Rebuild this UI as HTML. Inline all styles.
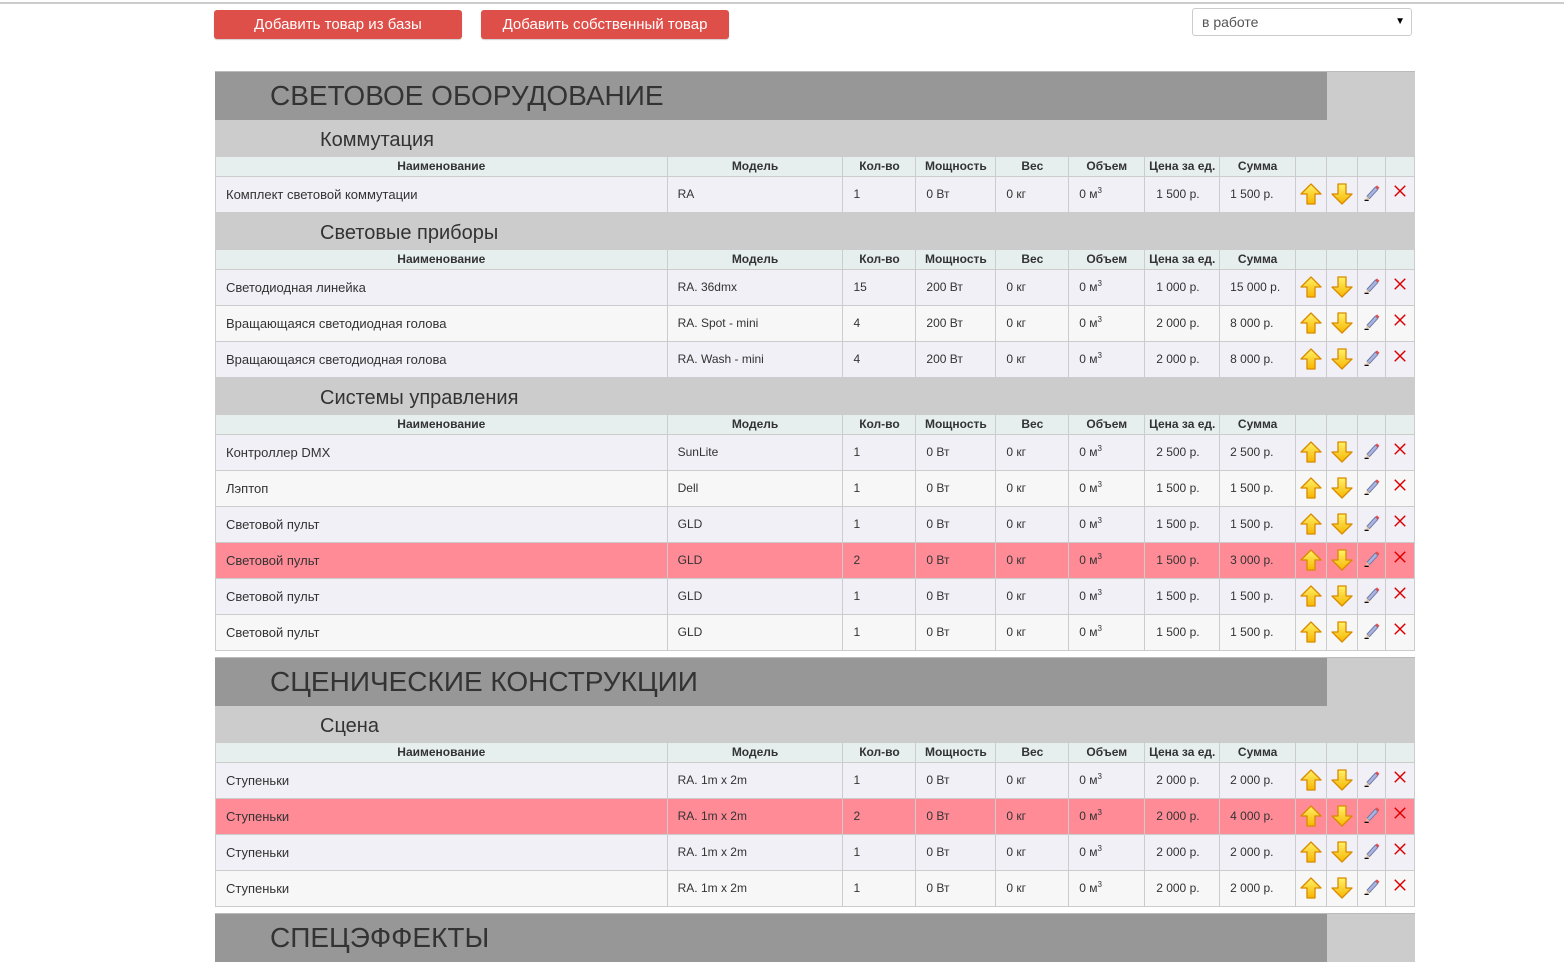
<!DOCTYPE html>
<html><head><meta charset="utf-8"><style>
*{box-sizing:border-box;margin:0;padding:0}
body{width:1564px;height:940px;overflow:hidden;background:#fff;font-family:"Liberation Sans",Arial,sans-serif;color:#333;position:relative}
.topline{position:absolute;left:0;top:0;width:1564px;height:4px;background:#fff;border-bottom:2px solid #ccc}
.btn{position:absolute;top:10px;height:29px;background:#de4f4a;border-radius:3px;color:#fff;font-size:15px;line-height:29px;text-align:center;box-shadow:0 1px 1px rgba(0,0,0,.2)}
.sel{position:absolute;left:1192px;top:8px;width:220px;height:28px;border:1px solid #ccc;border-radius:3px;font-size:14px;line-height:26px;padding-left:9px;color:#555}
.sel span{position:absolute;right:6px;top:0;font-size:10px;color:#000}
.wrap{position:absolute;left:215px;width:1200px}
.cat{height:49px;background:#ccc;position:relative;border-top:1px solid #bbb}
.cat div{position:absolute;left:0;top:0;width:1112px;height:48px;background:#979797;font-size:28px;line-height:48px;padding-left:55px;color:#333}
.sub{height:37px;background:#ccc;font-size:20px;line-height:37px;padding-left:105px;padding-top:2px;color:#333}
.r{display:flex;height:36px;border-bottom:1px solid #ccc;border-left:1px solid #ccc;border-right:1px solid #ccc;font-size:12px;line-height:35px}
.r>div{border-right:1px solid #ccc;padding-left:10px;white-space:nowrap;overflow:hidden}
.r>div:last-child{border-right:none}
.h{height:20px;line-height:19px;background:#e6eeee;font-weight:bold;font-size:12px}
.h>div{text-align:center;padding-left:0 !important;overflow:visible !important}
.a{background:#f0f0f6}.b{background:#f7f7f7}.p{background:#ff8b97}
.r>div:nth-child(1){width:452px;font-size:13px}
.h>div:nth-child(1){font-size:12px}
.r>div:nth-child(2){width:176px}
.r>div:nth-child(3){width:73px}
.r>div:nth-child(4){width:80px}
.r>div:nth-child(5){width:73px}
.r>div:nth-child(6){width:76px}
.r>div:nth-child(7){width:75px}
.r>div:nth-child(8){width:76px}
.r>div:nth-child(9){width:31px;padding:0}
.r>div:nth-child(10){width:31px;padding:0}
.r>div:nth-child(11){width:28px;padding:0}
.r>div:nth-child(12){width:28px;padding:0}
.r>div:nth-child(7){padding-left:11px}
svg{display:block;margin:5px auto 0}
sup{font-size:8px;line-height:0}
</style></head><body>
<div class="topline"></div>
<div class="btn" style="left:214px;width:248px">Добавить товар из базы</div>
<div class="btn" style="left:481px;width:248px">Добавить собственный товар</div>
<div class="sel">в работе<span>▼</span></div>

<svg width="0" height="0" style="position:absolute">
<defs>
<linearGradient id="g" x1="0" y1="0" x2="0" y2="1"><stop offset="0" stop-color="#fff26a"/><stop offset="1" stop-color="#f7b500"/></linearGradient>
<symbol id="up" viewBox="0 0 24 24"><path d="M12 2 L22 12 L16 12 L16 22 L8 22 L8 12 L2 12 Z" fill="url(#g)" stroke="#d98a00" stroke-width="1.3" stroke-linejoin="round"/></symbol>
<symbol id="dn" viewBox="0 0 24 24"><path d="M12 22 L22 12 L16 12 L16 2 L8 2 L8 12 L2 12 Z" fill="url(#g)" stroke="#d98a00" stroke-width="1.3" stroke-linejoin="round"/></symbol>
<symbol id="ed" viewBox="0 0 24 24"><path d="M6 17 L16 6 L19 9 L9 20 Z" fill="#a8b4e0" stroke="#6670a0" stroke-width="1"/><path d="M16 6 L18 4 L21 7 L19 9 Z" fill="#e05050"/><path d="M6 17 L9 20 L5 21 Z" fill="#e8c890"/><path d="M3 22 L8 22" stroke="#000" stroke-width="1.5"/></symbol>
<symbol id="x" viewBox="0 0 24 24"><path d="M5 5 L19 19 M19 5 L5 19" stroke="#d00" stroke-width="2"/></symbol>
</defs></svg>

<div class="wrap" style="top:71px">
<div class="cat"><div>СВЕТОВОЕ ОБОРУДОВАНИЕ</div></div>
<div class="sub">Коммутация</div>
<div class="r h"><div>Наименование</div><div>Модель</div><div>Кол-во</div><div>Мощность</div><div>Вес</div><div>Объем</div><div>Цена за ед.</div><div>Сумма</div><div></div><div></div><div></div><div></div></div>
<div class="r a"><div>Комплект световой коммутации</div><div>RA</div><div>1</div><div>0 Вт</div><div>0 кг</div><div>0 м<sup>3</sup></div><div>1 500 р.</div><div>1 500 р.</div><div><svg width="24" height="24"><use href="#up"/></svg></div><div><svg width="24" height="24"><use href="#dn"/></svg></div><div><svg width="20" height="20"><use href="#ed"/></svg></div><div><svg width="18" height="18"><use href="#x"/></svg></div></div>
<div class="sub">Световые приборы</div>
<div class="r h"><div>Наименование</div><div>Модель</div><div>Кол-во</div><div>Мощность</div><div>Вес</div><div>Объем</div><div>Цена за ед.</div><div>Сумма</div><div></div><div></div><div></div><div></div></div>
<div class="r a"><div>Светодиодная линейка</div><div>RA. 36dmx</div><div>15</div><div>200 Вт</div><div>0 кг</div><div>0 м<sup>3</sup></div><div>1 000 р.</div><div>15 000 р.</div><div><svg width="24" height="24"><use href="#up"/></svg></div><div><svg width="24" height="24"><use href="#dn"/></svg></div><div><svg width="20" height="20"><use href="#ed"/></svg></div><div><svg width="18" height="18"><use href="#x"/></svg></div></div>
<div class="r b"><div>Вращающаяся светодиодная голова</div><div>RA. Spot - mini</div><div>4</div><div>200 Вт</div><div>0 кг</div><div>0 м<sup>3</sup></div><div>2 000 р.</div><div>8 000 р.</div><div><svg width="24" height="24"><use href="#up"/></svg></div><div><svg width="24" height="24"><use href="#dn"/></svg></div><div><svg width="20" height="20"><use href="#ed"/></svg></div><div><svg width="18" height="18"><use href="#x"/></svg></div></div>
<div class="r a"><div>Вращающаяся светодиодная голова</div><div>RA. Wash - mini</div><div>4</div><div>200 Вт</div><div>0 кг</div><div>0 м<sup>3</sup></div><div>2 000 р.</div><div>8 000 р.</div><div><svg width="24" height="24"><use href="#up"/></svg></div><div><svg width="24" height="24"><use href="#dn"/></svg></div><div><svg width="20" height="20"><use href="#ed"/></svg></div><div><svg width="18" height="18"><use href="#x"/></svg></div></div>
<div class="sub">Системы управления</div>
<div class="r h"><div>Наименование</div><div>Модель</div><div>Кол-во</div><div>Мощность</div><div>Вес</div><div>Объем</div><div>Цена за ед.</div><div>Сумма</div><div></div><div></div><div></div><div></div></div>
<div class="r a"><div>Контроллер DMX</div><div>SunLite</div><div>1</div><div>0 Вт</div><div>0 кг</div><div>0 м<sup>3</sup></div><div>2 500 р.</div><div>2 500 р.</div><div><svg width="24" height="24"><use href="#up"/></svg></div><div><svg width="24" height="24"><use href="#dn"/></svg></div><div><svg width="20" height="20"><use href="#ed"/></svg></div><div><svg width="18" height="18"><use href="#x"/></svg></div></div>
<div class="r b"><div>Лэптоп</div><div>Dell</div><div>1</div><div>0 Вт</div><div>0 кг</div><div>0 м<sup>3</sup></div><div>1 500 р.</div><div>1 500 р.</div><div><svg width="24" height="24"><use href="#up"/></svg></div><div><svg width="24" height="24"><use href="#dn"/></svg></div><div><svg width="20" height="20"><use href="#ed"/></svg></div><div><svg width="18" height="18"><use href="#x"/></svg></div></div>
<div class="r a"><div>Световой пульт</div><div>GLD</div><div>1</div><div>0 Вт</div><div>0 кг</div><div>0 м<sup>3</sup></div><div>1 500 р.</div><div>1 500 р.</div><div><svg width="24" height="24"><use href="#up"/></svg></div><div><svg width="24" height="24"><use href="#dn"/></svg></div><div><svg width="20" height="20"><use href="#ed"/></svg></div><div><svg width="18" height="18"><use href="#x"/></svg></div></div>
<div class="r p"><div>Световой пульт</div><div>GLD</div><div>2</div><div>0 Вт</div><div>0 кг</div><div>0 м<sup>3</sup></div><div>1 500 р.</div><div>3 000 р.</div><div><svg width="24" height="24"><use href="#up"/></svg></div><div><svg width="24" height="24"><use href="#dn"/></svg></div><div><svg width="20" height="20"><use href="#ed"/></svg></div><div><svg width="18" height="18"><use href="#x"/></svg></div></div>
<div class="r a"><div>Световой пульт</div><div>GLD</div><div>1</div><div>0 Вт</div><div>0 кг</div><div>0 м<sup>3</sup></div><div>1 500 р.</div><div>1 500 р.</div><div><svg width="24" height="24"><use href="#up"/></svg></div><div><svg width="24" height="24"><use href="#dn"/></svg></div><div><svg width="20" height="20"><use href="#ed"/></svg></div><div><svg width="18" height="18"><use href="#x"/></svg></div></div>
<div class="r b"><div>Световой пульт</div><div>GLD</div><div>1</div><div>0 Вт</div><div>0 кг</div><div>0 м<sup>3</sup></div><div>1 500 р.</div><div>1 500 р.</div><div><svg width="24" height="24"><use href="#up"/></svg></div><div><svg width="24" height="24"><use href="#dn"/></svg></div><div><svg width="20" height="20"><use href="#ed"/></svg></div><div><svg width="18" height="18"><use href="#x"/></svg></div></div>
</div>

<div class="wrap" style="top:657px">
<div class="cat"><div>СЦЕНИЧЕСКИЕ КОНСТРУКЦИИ</div></div>
<div class="sub">Сцена</div>
<div class="r h"><div>Наименование</div><div>Модель</div><div>Кол-во</div><div>Мощность</div><div>Вес</div><div>Объем</div><div>Цена за ед.</div><div>Сумма</div><div></div><div></div><div></div><div></div></div>
<div class="r a"><div>Ступеньки</div><div>RA. 1m x 2m</div><div>1</div><div>0 Вт</div><div>0 кг</div><div>0 м<sup>3</sup></div><div>2 000 р.</div><div>2 000 р.</div><div><svg width="24" height="24"><use href="#up"/></svg></div><div><svg width="24" height="24"><use href="#dn"/></svg></div><div><svg width="20" height="20"><use href="#ed"/></svg></div><div><svg width="18" height="18"><use href="#x"/></svg></div></div>
<div class="r p"><div>Ступеньки</div><div>RA. 1m x 2m</div><div>2</div><div>0 Вт</div><div>0 кг</div><div>0 м<sup>3</sup></div><div>2 000 р.</div><div>4 000 р.</div><div><svg width="24" height="24"><use href="#up"/></svg></div><div><svg width="24" height="24"><use href="#dn"/></svg></div><div><svg width="20" height="20"><use href="#ed"/></svg></div><div><svg width="18" height="18"><use href="#x"/></svg></div></div>
<div class="r a"><div>Ступеньки</div><div>RA. 1m x 2m</div><div>1</div><div>0 Вт</div><div>0 кг</div><div>0 м<sup>3</sup></div><div>2 000 р.</div><div>2 000 р.</div><div><svg width="24" height="24"><use href="#up"/></svg></div><div><svg width="24" height="24"><use href="#dn"/></svg></div><div><svg width="20" height="20"><use href="#ed"/></svg></div><div><svg width="18" height="18"><use href="#x"/></svg></div></div>
<div class="r b"><div>Ступеньки</div><div>RA. 1m x 2m</div><div>1</div><div>0 Вт</div><div>0 кг</div><div>0 м<sup>3</sup></div><div>2 000 р.</div><div>2 000 р.</div><div><svg width="24" height="24"><use href="#up"/></svg></div><div><svg width="24" height="24"><use href="#dn"/></svg></div><div><svg width="20" height="20"><use href="#ed"/></svg></div><div><svg width="18" height="18"><use href="#x"/></svg></div></div>
</div>

<div class="wrap" style="top:913px">
<div class="cat"><div>СПЕЦЭФФЕКТЫ</div></div>
</div>
</body></html>
